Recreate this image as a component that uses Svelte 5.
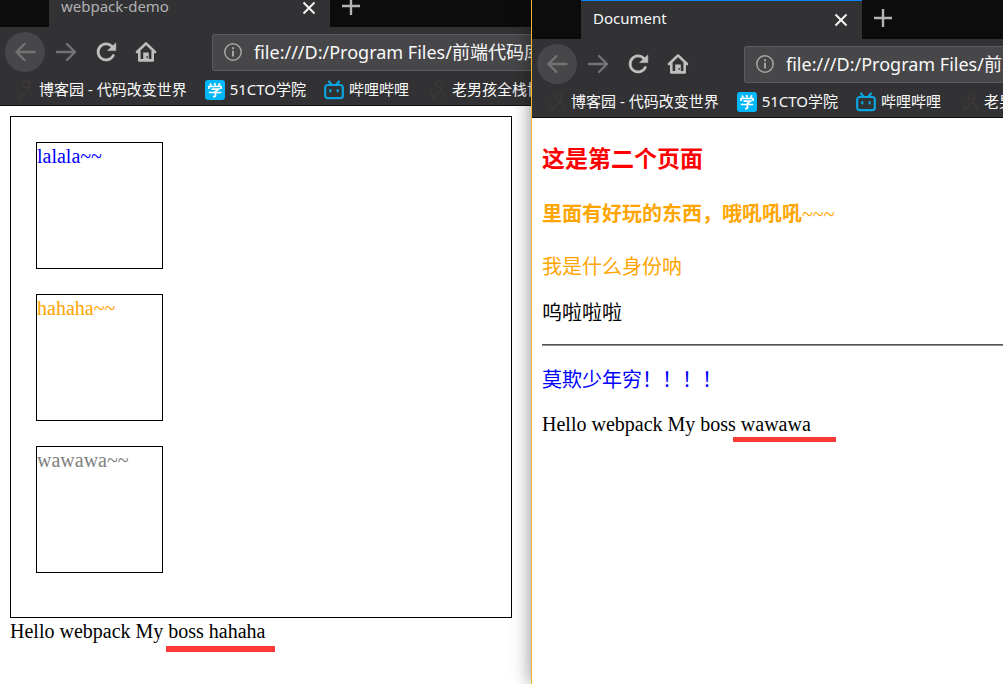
<script>
  const url = 'file:///D:/Program Files/前端代码库';
  const bookmarks = [
    { icon: 'figure', label: '博客园 - 代码改变世界' },
    { icon: 'study', label: '51CTO学院' },
    { icon: 'tv', label: '哔哩哔哩' },
    { icon: 'figure', label: '老男孩全栈博' }
  ];
  const boxes = [
    { text: 'lalala~~', tone: 'blue' },
    { text: 'hahaha~~', tone: 'orange' },
    { text: 'wawawa~~', tone: 'gray' }
  ];
</script>

{#snippet chrome(title, active)}
  <header class="chrome">
    <div class="strip">
      <div class="tab" class:active>
        <span class="title">{title}</span>
        <button class="close" aria-label="Close tab">
          <svg width="14" height="14" viewBox="0 0 14 14"><path d="M1.5 1.5l11 11M12.5 1.5l-11 11" stroke="#f4f4f5" stroke-width="2" /></svg>
        </button>
      </div>
      <button class="new" aria-label="New tab">
        <svg width="18" height="18" viewBox="0 0 18 18"><path d="M9 0v18M0 9h18" stroke="#b4b4b5" stroke-width="2.4" /></svg>
      </button>
    </div>
    <nav class="toolbar" aria-label="Navigation">
      <button class="tool back" aria-label="Back">
        <svg width="24" height="24" viewBox="0 0 24 24"><path d="M21.5 12H3.5M11.5 4l-8 8 8 8" class="faint" /></svg>
      </button>
      <button class="tool" aria-label="Forward">
        <svg width="24" height="24" viewBox="0 0 24 24"><path d="M4 12h18M14 4l8 8-8 8" class="faint" /></svg>
      </button>
      <button class="tool" aria-label="Reload">
        <svg width="24" height="24" viewBox="0 0 24 24">
          <path d="M20.3 15.5A8 8 0 1 1 19 6.5" fill="none" stroke="#bebebf" stroke-width="2.8" stroke-linecap="round" />
          <path d="M22.8 3v7.6h-8.2z" fill="#bebebf" stroke="#bebebf" stroke-width=".6" stroke-linejoin="round" />
        </svg>
      </button>
      <button class="tool" aria-label="Home">
        <svg width="24" height="24" viewBox="0 0 24 24">
          <path d="M4 12l9-8.6 9 8.6M6.3 11v9.4h13.4V11" fill="none" stroke="#bebebf" stroke-width="2.6" stroke-linecap="round" stroke-linejoin="round" />
          <path fill-rule="evenodd" d="M10.2 21v-8.4h5.6V21zM13.5 16v2h1.2v-2z" fill="#bebebf" />
        </svg>
      </button>
      <label class="address">
        <svg width="18" height="18" viewBox="0 0 18 18">
          <circle cx="9" cy="9" r="8.2" fill="none" stroke="#a5a5a6" stroke-width="1.5" />
          <path d="M9 7.8v5.6M9 4.3v2" stroke="#a5a5a6" stroke-width="2" />
        </svg>
        <input type="text" value={url} aria-label="Address" />
      </label>
    </nav>
    <nav class="bookmarks" aria-label="Bookmarks">
      {#each bookmarks as mark}
        <a href="#top">
          <svg width="20" height="20" viewBox="0 0 20 20">
            {#if mark.icon === 'figure'}
              <g fill="none" stroke="#3f3938" stroke-width="1.3">
                <circle cx="12.5" cy="4.5" r="3.2" />
                <path d="M15.7 4.5c0 4-2 6.5-5 8M3 8.5c0 3 1 5.5 3.5 9l4-5M14 9c2 3 3.5 6 4.5 9" />
              </g>
            {:else if mark.icon === 'study'}
              <rect width="20" height="20" rx="3" fill="#00b7fa" />
              <path d="M5 3.5l1.2 2.2M9.5 3l.8 2.5M15 3.2l-1.5 2.5M4 9V6.500h12V9M6.500 9.200h7l-3 2.300v4q0 1.200-2.500 1M3.800 12.500h12.600" fill="none" stroke="#fff" stroke-width="1.7" />
            {:else}
              <g fill="none" stroke="#0aa5de" stroke-width="2.2" stroke-linecap="round">
                <rect x="1.2" y="5" width="17.6" height="13.2" rx="2.5" />
                <path d="M5 1.5l2.5 3M15 1.5l-2.5 3M6.3 10v1.5M13.7 10v1.5" />
              </g>
            {/if}
          </svg>
          <span>{mark.label}</span>
        </a>
      {/each}
    </nav>
  </header>
{/snippet}

<div class="desktop" id="top">
  <section class="window rear">
    {@render chrome('webpack-demo', false)}
    <main class="page">
      <div class="frame">
        {#each boxes as box}
          <div class="box {box.tone}">{box.text}</div>
        {/each}
      </div>
      <div class="hello">Hello webpack My boss hahaha<i class="mark low"></i></div>
    </main>
  </section>

  <section class="window front">
    {@render chrome('Document', true)}
    <main class="page doc">
      <h3 class="red">这是第二个页面</h3>
      <h4 class="orange">里面有好玩的东西，哦吼吼吼<span>~~~</span></h4>
      <p class="orange">我是什么身份呐</p>
      <p>呜啦啦啦</p>
      <hr />
      <p class="blue">莫欺少年穷！！！！</p>
      <div class="hello">Hello webpack My boss wawawa<i class="mark"></i></div>
    </main>
  </section>
</div>

<style>
  .desktop {
    display: grid;
    grid-template-columns: minmax(0, 9fr) minmax(0, 8fr);
    min-height: 100vh;
    overflow: hidden;
    background: #fff;
  }
  .window {
    min-width: 0;
    overflow: hidden;
    background: #fff;
  }
  .rear .chrome {
    margin-top: -12px;
  }
  .front {
    position: relative;
    overflow: visible;
    border-left: 1px solid #f8b830;
    box-shadow: 0 0 18px rgba(0, 0, 0, 0.45);
  }
  .chrome {
    font-family: "Noto Sans", "Noto Sans CJK SC", sans-serif;
    color: #f9f9fa;
    background: #323234;
    border-bottom: 1px solid #0c0c0d;
    overflow: hidden;
  }
  button {
    display: grid;
    place-items: center;
    padding: 0;
    border: 0;
    background: none;
  }
  .strip {
    display: flex;
    height: 39px;
    background: #0c0c0d;
  }
  .tab {
    display: flex;
    align-items: center;
    justify-content: space-between;
    box-sizing: border-box;
    width: 281px;
    margin-left: 49px;
    padding: 0 14px 0 12px;
    border-top: 1px solid #323234;
    background: #323234;
    font-size: 15px;
    line-height: 20px;
    color: #b1b1b3;
  }
  .tab.active {
    border-top-color: #0a84ff;
    color: #f9f9fa;
  }
  .title {
    padding-bottom: 4px;
  }
  .new {
    width: 42px;
    height: 36px;
  }
  .toolbar {
    display: flex;
    align-items: center;
    height: 50px;
    padding-left: 5px;
  }
  .tool {
    flex: none;
    width: 40px;
    height: 40px;
    border-radius: 50%;
  }
  .back {
    background: #474749;
  }
  .faint {
    fill: none;
    stroke: #737375;
    stroke-width: 2.4;
    stroke-linecap: round;
    stroke-linejoin: round;
  }
  .address {
    display: flex;
    flex: 1;
    align-items: center;
    gap: 12px;
    box-sizing: border-box;
    min-width: 0;
    height: 37px;
    margin-left: 47px;
    padding-left: 11px;
    border: 1px solid #5c5c5e;
    border-right: 0;
    border-radius: 3px 0 0 3px;
    background: #474749;
  }
  .address svg {
    flex: none;
  }
  input {
    flex: 1;
    min-width: 0;
    padding: 0 0 2px;
    border: 0;
    outline: 0;
    background: none;
    color: #f9f9fa;
    font-family: inherit;
    font-size: 18px;
  }
  .bookmarks {
    display: flex;
    gap: 18px;
    height: 26px;
    padding: 0 0 2px 14px;
    font-size: 15px;
    line-height: 20px;
    white-space: nowrap;
  }
  .bookmarks a {
    display: flex;
    flex: none;
    align-items: center;
    gap: 5px;
    color: inherit;
    text-decoration: none;
  }
  .bookmarks span {
    padding-bottom: 2px;
  }
  .page {
    padding: 10px;
    font-family: "Liberation Serif", "Noto Sans CJK SC", serif;
    font-size: 20px;
    line-height: 26px;
    color: #000;
  }
  .frame {
    display: flex;
    flex-direction: column;
    gap: 25px;
    box-sizing: border-box;
    max-width: 502px;
    height: 502px;
    padding: 25px;
    border: 1px solid #000;
  }
  .box {
    width: 125px;
    height: 125px;
    border: 1px solid #000;
  }
  .hello {
    position: relative;
    white-space: nowrap;
  }
  .mark {
    position: absolute;
    top: 26px;
    left: 191px;
    width: 103px;
    height: 5px;
    background: #ff3838;
  }
  .mark.low {
    top: 28px;
    left: 156px;
    width: 109px;
    height: 6px;
  }
  .doc {
    padding: 29px 0 10px 10px;
  }
  h3,
  h4 {
    margin: 0 0 28px;
    font-size: 23px;
  }
  h4 {
    margin-bottom: 27px;
    font-size: 20px;
  }
  h4 span {
    font-weight: 400;
  }
  p {
    margin: 0 0 18px;
  }
  p.orange {
    margin-bottom: 20px;
  }
  hr {
    height: 1px;
    margin: 0 0 21px;
    border: 0;
    border-top: 1px solid #555;
    background: #8a8a8a;
  }
  .red {
    color: red;
  }
  .blue {
    color: blue;
  }
  .orange {
    color: orange;
  }
  .gray {
    color: gray;
  }
</style>
